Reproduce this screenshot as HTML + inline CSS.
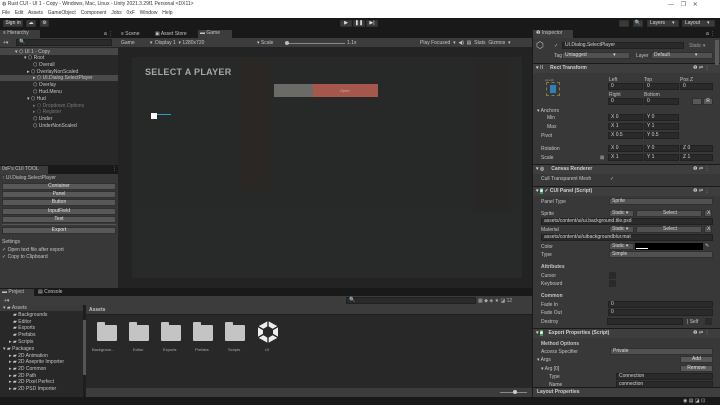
<!DOCTYPE html>
<html><head><meta charset="utf-8"><style>
*{margin:0;padding:0;box-sizing:border-box}
body{width:720px;height:405px;overflow:hidden;background:#191919;font-family:"Liberation Sans",sans-serif;font-size:5px;color:#c4c4c4;position:relative}
div,span{position:absolute;white-space:nowrap}
.t{line-height:6px}
.f{background:#2a2a2a;border:1px solid #212121;height:7px;line-height:5px;padding-left:2px;color:#d2d2d2}
.dd{background:#515151;border:1px solid #303030;height:7px;line-height:5px;padding-left:2px;color:#d8d8d8}
.btn{background:#585858;border:1px solid #303030;height:7px;line-height:5px;text-align:center;color:#e0e0e0}
.hdr{background:#3e3e3e;border-top:1px solid #1a1a1a;height:10px;line-height:9px;font-weight:bold;color:#d0d0d0}
.fold{width:20px;height:16px;background:#c4c4c4;border-radius:0 1px 1px 1px}
.fold:before{content:"";position:absolute;left:0;top:-3px;width:8px;height:3px;background:#c4c4c4;border-radius:1px 1px 0 0}
</style></head><body>
<div style="left:0;top:0;width:720px;height:18px;background:#fff"></div>
<div class="t" style="left:2px;top:1px;color:#333">◍ Rust CUI - UI 1 - Copy - Windows, Mac, Linux - Unity 2021.3.29f1 Personal &lt;DX11&gt;</div>
<div class="t" style="left:2px;top:10px;color:#333;word-spacing:1px">File&nbsp; Edit&nbsp; Assets&nbsp; GameObject&nbsp; Component&nbsp; Jobs&nbsp; 0xF&nbsp; Window&nbsp; Help</div>
<div class="t" style="left:668px;top:2px;color:#555;font-size:6px">—&nbsp;&nbsp;&nbsp;&nbsp;❐&nbsp;&nbsp;&nbsp;&nbsp;✕</div>
<div style="left:0;top:18px;width:720px;height:11px;background:#191919"></div>
<div class="btn" style="left:3px;top:20px;width:20px;background:#3a3a3a">Sign in</div>
<div class="btn" style="left:26px;top:20px;width:10px;background:#3a3a3a">☁</div>
<div class="btn" style="left:40px;top:20px;width:9px;background:#3a3a3a">⚙</div>
<div class="btn" style="left:340px;top:20px;width:12px;background:#3a3a3a">▶</div>
<div class="btn" style="left:353px;top:20px;width:12px;background:#3a3a3a">❚❚</div>
<div class="btn" style="left:366px;top:20px;width:12px;background:#3a3a3a">▶|</div>
<div class="btn" style="left:619px;top:20px;width:10px;background:#3a3a3a"></div>
<div class="btn" style="left:633px;top:20px;width:10px;background:#3a3a3a">🔍</div>
<div class="dd" style="left:647px;top:20px;width:32px;background:#3a3a3a">Layers&nbsp;&nbsp;&nbsp;&nbsp;&nbsp;▾</div>
<div class="dd" style="left:682px;top:20px;width:33px;background:#3a3a3a">Layout&nbsp;&nbsp;&nbsp;&nbsp;&nbsp;▾</div>

<div style="left:0;top:29px;width:118px;height:136px;background:#282828"></div>
<div style="left:0;top:29px;width:118px;height:9px;background:#191919"></div>
<div class="t" style="left:0;top:30px;width:40px;height:8px;background:#3c3c3c;padding-left:3px">≡ Hierarchy</div>
<div class="t" style="left:104px;top:31px">a ⋮</div>
<div style="left:0;top:38px;width:118px;height:9px;background:#3c3c3c"></div>
<div class="t" style="left:3px;top:40px">+▾</div>
<div class="f" style="left:16px;top:39px;width:96px">🔍</div>
<div style="left:0;top:48px;width:118px;height:7px;background:#464646"></div>
<div class="t" style="left:15px;top:49px">▾ ⬡ UI 1 - Copy</div>
<div class="t" style="left:24px;top:55px">▾ ⬡ Root</div>
<div class="t" style="left:33px;top:62px">⬡ Overall</div>
<div class="t" style="left:27px;top:69px">▸ ⬡ OverlayNonScaled</div>
<div style="left:0;top:75px;width:118px;height:6px;background:#4a4a4a"></div>
<div class="t" style="left:33px;top:75px">▸ ⬡ UI.Dialog.SelectPlayer</div>
<div class="t" style="left:33px;top:82px">⬡ Overlay</div>
<div class="t" style="left:33px;top:89px">⬡ Hud.Menu</div>
<div class="t" style="left:27px;top:96px">▾ ⬡ Hud</div>
<div class="t" style="left:33px;top:103px;color:#777">▸ ⬡ Dropdown.Options</div>
<div class="t" style="left:33px;top:109px;color:#777">▸ ⬡ Register</div>
<div class="t" style="left:33px;top:116px">⬡ Under</div>
<div class="t" style="left:33px;top:123px">⬡ UnderNonScaled</div>

<div style="left:0;top:165px;width:118px;height:123px;background:#383838"></div>
<div style="left:0;top:165px;width:118px;height:9px;background:#191919"></div>
<div class="t" style="left:0;top:166px;width:48px;height:8px;background:#3c3c3c;padding-left:2px">0xF's CUI TOOL</div>
<div class="t" style="left:112px;top:166px">⋮</div>
<div class="t" style="left:2px;top:175px">↑ UI.Dialog.SelectPlayer</div>
<div class="btn" style="left:2px;top:183px;width:114px">Container</div>
<div class="btn" style="left:2px;top:191px;width:114px">Panel</div>
<div class="btn" style="left:2px;top:199px;width:114px">Button</div>
<div class="btn" style="left:2px;top:208px;width:114px">InputField</div>
<div class="btn" style="left:2px;top:216px;width:114px">Text</div>
<div style="left:2px;top:224px;width:114px;height:1px;background:#555"></div>
<div class="btn" style="left:2px;top:227px;width:114px">Export</div>
<div class="t" style="left:2px;top:239px">Settings</div>
<div class="t" style="left:2px;top:247px">✓ Open text file after export</div>
<div class="t" style="left:2px;top:254px">✓ Copy to Clipboard</div>

<div style="left:118px;top:29px;width:414px;height:259px;background:#232323"></div>
<div style="left:118px;top:29px;width:414px;height:9px;background:#191919"></div>
<div class="t" style="left:121px;top:31px">≡ Scene</div>
<div class="t" style="left:155px;top:31px">▣ Asset Store</div>
<div class="t" style="left:198px;top:30px;width:34px;height:8px;background:#3c3c3c;padding-left:2px">▬ Game</div>
<div style="left:118px;top:38px;width:414px;height:9px;background:#3c3c3c"></div>
<div class="t" style="left:121px;top:40px">Game&nbsp;&nbsp;&nbsp;&nbsp;&nbsp;&nbsp;&nbsp;&nbsp;&nbsp;&nbsp;&nbsp;▾&nbsp;&nbsp;Display 1&nbsp;&nbsp;▾&nbsp;1280x720</div>
<div class="t" style="left:257px;top:40px">▾ Scale</div>
<div style="left:285px;top:43px;width:60px;height:1px;background:#888"></div>
<div style="left:285px;top:41px;width:4px;height:4px;border-radius:2px;background:#bbb"></div>
<div class="t" style="left:347px;top:40px">1.1x</div>
<div class="t" style="left:420px;top:40px">Play Focused&nbsp; ▾&nbsp; ◀)&nbsp; ▤&nbsp; Stats&nbsp; Gizmos&nbsp; ▾</div>
<div style="left:132px;top:57px;width:390px;height:221px;background:#262927"></div>
<div style="left:240px;top:60px;width:30px;height:130px;background:#2a2725"></div>
<div style="left:475px;top:60px;width:35px;height:150px;background:#292725"></div>
<div style="left:132px;top:215px;width:390px;height:63px;background:#282a29"></div>
<div class="t" style="left:145px;top:67px;font-size:9px;line-height:10px;font-weight:bold;color:#a8a8a4;letter-spacing:0.3px">SELECT A PLAYER</div>
<div style="left:274px;top:84px;width:39px;height:13px;background:#6a6a67"></div>
<div style="left:313px;top:84px;width:65px;height:13px;background:#a5574b"></div>
<div class="t" style="left:340px;top:88px;font-size:4px;color:#d8a8a0">Open</div>
<div style="left:151px;top:113px;width:6px;height:6px;background:#fff"></div>
<div style="left:157px;top:114px;width:14px;height:1px;background:#2a9dc8"></div>

<div style="left:0;top:288px;width:532px;height:109px;background:#282828"></div>
<div style="left:0;top:288px;width:532px;height:8px;background:#191919"></div>
<div class="t" style="left:0;top:289px;width:34px;height:7px;background:#3c3c3c;padding-left:2px">▬ Project</div>
<div class="t" style="left:38px;top:289px">▤ Console</div>
<div style="left:0;top:296px;width:532px;height:9px;background:#3c3c3c"></div>
<div class="t" style="left:4px;top:298px">+▾</div>
<div class="f" style="left:346px;top:297px;width:130px">🔍</div>
<div class="t" style="left:478px;top:298px;color:#aaa">▦ ◆ ◈ ★ ◪ 12</div>
<div style="left:0;top:305px;width:85px;height:6px;background:#3a3a3a"></div>
<div class="t" style="left:3px;top:305px">▾ ▰ Assets</div>
<div class="t" style="left:13px;top:312px">▰ Backgrounds</div>
<div class="t" style="left:13px;top:319px">▰ Editor</div>
<div class="t" style="left:13px;top:325px">▰ Exports</div>
<div class="t" style="left:13px;top:332px">▰ Prefabs</div>
<div class="t" style="left:9px;top:339px">▸ ▰ Scripts</div>
<div class="t" style="left:3px;top:346px">▾ ▰ Packages</div>
<div class="t" style="left:9px;top:353px">▸ ▰ 2D Animation</div>
<div class="t" style="left:9px;top:359px">▸ ▰ 2D Aseprite Importer</div>
<div class="t" style="left:9px;top:366px">▸ ▰ 2D Common</div>
<div class="t" style="left:9px;top:373px">▸ ▰ 2D Path</div>
<div class="t" style="left:9px;top:379px">▸ ▰ 2D Pixel Perfect</div>
<div class="t" style="left:9px;top:386px">▸ ▰ 2D PSD Importer</div>
<div style="left:83px;top:305px;width:3px;height:92px;background:#1e1e1e"></div>
<div style="left:83px;top:320px;width:3px;height:55px;background:#555"></div>
<div style="left:86px;top:305px;width:446px;height:9px;background:#3c3c3c"></div>
<div class="t" style="left:89px;top:307px;font-weight:bold">Assets</div>
<div style="left:86px;top:314px;width:446px;height:1px;background:#1e1e1e"></div>
<div class="fold" style="left:97px;top:325px"></div>
<div class="fold" style="left:129px;top:325px"></div>
<div class="fold" style="left:161px;top:325px"></div>
<div class="fold" style="left:193px;top:325px"></div>
<div class="fold" style="left:225px;top:325px"></div>
<svg style="position:absolute;left:257px;top:320px" width="22" height="24" viewBox="0 0 22 24"><path d="M11 1 L21 6.5 V17.5 L11 23 L1 17.5 V6.5 Z" fill="#eee"/><path d="M11 6 L16 9 V15 L11 18 L6 15 V9 Z" fill="#282828"/><path d="M11 1 V8 M21 6.5 L15 10 M1 6.5 L7 10 M11 23 V16 M1 17.5 L7 14 M21 17.5 L15 14" stroke="#282828" stroke-width="1.4"/></svg>
<div class="t" style="left:92px;top:347px;color:#aaa;font-size:4px">Backgroun...</div>
<div class="t" style="left:133px;top:347px;color:#aaa;font-size:4px">Editor</div>
<div class="t" style="left:163px;top:347px;color:#aaa;font-size:4px">Exports</div>
<div class="t" style="left:195px;top:347px;color:#aaa;font-size:4px">Prefabs</div>
<div class="t" style="left:228px;top:347px;color:#aaa;font-size:4px">Scripts</div>
<div class="t" style="left:265px;top:347px;color:#aaa;font-size:4px">UI</div>
<div style="left:86px;top:388px;width:446px;height:9px;background:#3c3c3c"></div>
<div style="left:500px;top:392px;width:27px;height:1px;background:#888"></div>
<div style="left:513px;top:390px;width:4px;height:4px;border-radius:2px;background:#ccc"></div>

<div style="left:532px;top:29px;width:188px;height:368px;background:#383838;border-left:1px solid #1a1a1a"></div>
<div style="left:532px;top:29px;width:188px;height:9px;background:#191919"></div>
<div class="t" style="left:533px;top:30px;width:40px;height:8px;background:#3c3c3c;padding-left:3px">❶ Inspector</div>
<div class="t" style="left:706px;top:31px">a ⋮</div>
<div class="t" style="left:536px;top:41px;font-size:9px;line-height:9px">⬡</div>
<div class="t" style="left:554px;top:43px">✓</div>
<div class="f" style="left:562px;top:42px;width:122px">UI.Dialog.SelectPlayer</div>
<div class="t" style="left:689px;top:43px;color:#999">Static ▾</div>
<div class="t" style="left:554px;top:53px">Tag</div>
<div class="dd" style="left:562px;top:52px;width:68px">Untagged&nbsp;&nbsp;&nbsp;&nbsp;&nbsp;&nbsp;&nbsp;&nbsp;&nbsp;&nbsp;&nbsp;&nbsp;&nbsp;&nbsp;&nbsp;&nbsp;&nbsp;&nbsp;&nbsp;▾</div>
<div class="t" style="left:636px;top:53px">Layer</div>
<div class="dd" style="left:651px;top:52px;width:62px">Default&nbsp;&nbsp;&nbsp;&nbsp;&nbsp;&nbsp;&nbsp;&nbsp;&nbsp;&nbsp;&nbsp;&nbsp;&nbsp;&nbsp;&nbsp;&nbsp;&nbsp;&nbsp;▾</div>
<div class="hdr" style="left:533px;top:63px;width:187px;padding-left:3px">▾ ⁞⁞&nbsp;&nbsp;&nbsp;&nbsp;&nbsp;Rect Transform</div>
<div class="t" style="left:693px;top:65px">❷ ⇄ ⋮</div>
<div class="t" style="left:545px;top:77px;font-size:3px;color:#999">stretch</div>
<div style="left:546px;top:82px;width:14px;height:14px;border:1px dashed #8a7a3a"></div>
<div style="left:550px;top:85px;width:6px;height:8px;background:#2f7fbf"></div>
<div class="t" style="left:609px;top:77px">Left</div><div class="t" style="left:644px;top:77px">Top</div><div class="t" style="left:680px;top:77px">Pos Z</div>
<div class="f" style="left:608px;top:83px;width:35px">0</div><div class="f" style="left:644px;top:83px;width:35px">0</div><div class="f" style="left:680px;top:83px;width:33px">0</div>
<div class="t" style="left:609px;top:92px">Right</div><div class="t" style="left:644px;top:92px">Bottom</div>
<div class="f" style="left:608px;top:98px;width:35px">0</div><div class="f" style="left:644px;top:98px;width:35px">0</div>
<div class="btn" style="left:692px;top:98px;width:10px"></div><div class="btn" style="left:703px;top:98px;width:10px">R</div>
<div class="t" style="left:537px;top:108px">▾ Anchors</div>
<div class="t" style="left:547px;top:115px">Min</div><div class="f" style="left:608px;top:114px;width:35px">X 0</div><div class="f" style="left:644px;top:114px;width:35px">Y 0</div>
<div class="t" style="left:547px;top:124px">Max</div><div class="f" style="left:608px;top:123px;width:35px">X 1</div><div class="f" style="left:644px;top:123px;width:35px">Y 1</div>
<div class="t" style="left:541px;top:133px">Pivot</div><div class="f" style="left:608px;top:132px;width:35px">X 0.5</div><div class="f" style="left:644px;top:132px;width:35px">Y 0.5</div>
<div class="t" style="left:541px;top:146px">Rotation</div><div class="f" style="left:608px;top:145px;width:35px">X 0</div><div class="f" style="left:644px;top:145px;width:35px">Y 0</div><div class="f" style="left:680px;top:145px;width:33px">Z 0</div>
<div class="t" style="left:541px;top:155px">Scale</div><div class="t" style="left:600px;top:155px">⊠</div><div class="f" style="left:608px;top:154px;width:35px">X 1</div><div class="f" style="left:644px;top:154px;width:35px">Y 1</div><div class="f" style="left:680px;top:154px;width:33px">Z 1</div>
<div class="hdr" style="left:533px;top:164px;width:187px;padding-left:3px">▾ ◎&nbsp;&nbsp;&nbsp;&nbsp;&nbsp;Canvas Renderer</div>
<div class="t" style="left:693px;top:166px">❷ ⇄ ⋮</div>
<div class="t" style="left:541px;top:176px">Cull Transparent Mesh</div><div class="t" style="left:610px;top:176px">✓</div>
<div class="hdr" style="left:533px;top:186px;width:187px;padding-left:3px">▾ <span style="position:static;background:#3a9a5a;color:#fff">■</span> ✓ CUI Panel (Script)</div>
<div class="t" style="left:693px;top:188px">❷ ⇄ ⋮</div>
<div class="t" style="left:541px;top:199px">Panel Type</div><div class="dd" style="left:609px;top:198px;width:104px">Sprite</div>
<div class="t" style="left:541px;top:211px">Sprite</div><div class="dd" style="left:609px;top:210px;width:25px">Static ▾</div><div class="dd" style="left:636px;top:210px;width:66px;text-align:center">Select</div><div class="dd" style="left:704px;top:210px;width:8px">X</div>
<div class="f" style="left:541px;top:218px;width:172px">assets/content/ui/ui.background.tile.psd</div>
<div class="t" style="left:541px;top:227px">Material</div><div class="dd" style="left:609px;top:226px;width:25px">Static ▾</div><div class="dd" style="left:636px;top:226px;width:66px;text-align:center">Select</div><div class="dd" style="left:704px;top:226px;width:8px">X</div>
<div class="f" style="left:541px;top:234px;width:172px">assets/content/ui/uibackgroundblur.mat</div>
<div class="t" style="left:541px;top:244px">Color</div><div class="dd" style="left:609px;top:243px;width:25px">Static ▾</div>
<div style="left:635px;top:243px;width:68px;height:7px;background:#000"></div><div style="left:636px;top:248px;width:12px;height:1px;background:#fff"></div><div class="t" style="left:705px;top:243px">✎</div>
<div class="t" style="left:541px;top:252px">Type</div><div class="dd" style="left:609px;top:251px;width:104px">Simple</div>
<div class="t" style="left:541px;top:264px;font-weight:bold">Attributes</div>
<div class="t" style="left:541px;top:273px">Cursor</div><div style="left:609px;top:272px;width:7px;height:7px;background:#2a2a2a"></div>
<div class="t" style="left:541px;top:281px">Keyboard</div><div style="left:609px;top:280px;width:7px;height:7px;background:#2a2a2a"></div>
<div class="t" style="left:541px;top:293px;font-weight:bold">Common</div>
<div class="t" style="left:541px;top:302px">Fade In</div><div class="f" style="left:608px;top:301px;width:105px">0</div>
<div class="t" style="left:541px;top:310px">Fade Out</div><div class="f" style="left:608px;top:309px;width:105px">0</div>
<div class="t" style="left:541px;top:319px">Destroy</div><div class="f" style="left:607px;top:318px;width:76px"></div><div class="t" style="left:687px;top:319px">| Self</div><div style="left:705px;top:318px;width:7px;height:7px;background:#2a2a2a"></div>
<div class="hdr" style="left:533px;top:328px;width:187px;padding-left:3px">▾ <span style="position:static;background:#3a9a5a;color:#fff">■</span>&nbsp;&nbsp;&nbsp;&nbsp;Export Properties (Script)</div>
<div class="t" style="left:693px;top:330px">❷ ⇄ ⋮</div>
<div class="t" style="left:541px;top:341px;font-weight:bold">Method Options</div>
<div class="t" style="left:541px;top:349px">Access Specifier</div><div class="dd" style="left:610px;top:348px;width:103px">Private</div>
<div class="t" style="left:537px;top:357px">▾ Args</div><div class="btn" style="left:680px;top:356px;width:33px">Add</div>
<div class="t" style="left:541px;top:366px">▾ Arg [0]</div><div class="btn" style="left:680px;top:365px;width:33px">Remove</div>
<div class="t" style="left:549px;top:374px">Type</div><div class="f" style="left:616px;top:373px;width:97px">Connection</div>
<div class="t" style="left:549px;top:382px">Name</div><div class="f" style="left:616px;top:381px;width:97px">connection</div>
<div class="hdr" style="left:533px;top:387px;width:187px;padding-left:4px">Layout Properties</div>
<div style="left:715px;top:40px;width:4px;height:25px;background:#5a5a5a"></div>
<div style="left:0;top:397px;width:720px;height:8px;background:#191919"></div>
<div class="t" style="left:683px;top:398px;color:#bbb">◉ ▤ ◪ ⊡</div>
</body></html>
